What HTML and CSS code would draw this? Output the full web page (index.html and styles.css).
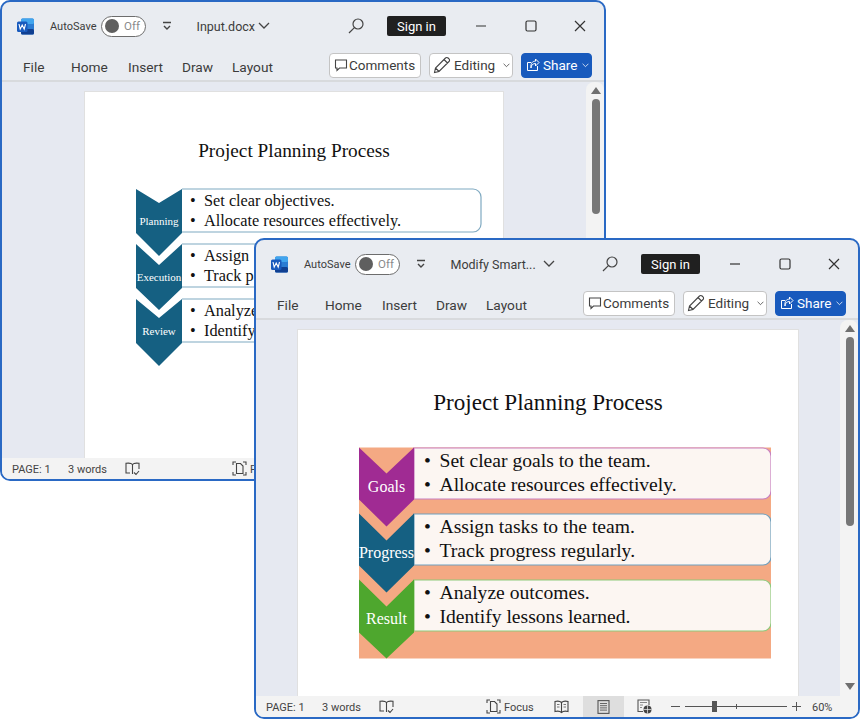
FILE: index.html
```html
<!DOCTYPE html>
<html lang="en">
<head>
    <meta charset="UTF-8">
    <meta name="viewport" content="width=device-width, initial-scale=1.0">
    <title>Word windows</title>
    <link rel="stylesheet" href="styles.css">
</head>
<body>
    <svg class="icon-defs" width="0" height="0">
        <symbol id="i-word" viewBox="0 0 17 17">
            <rect x="4" y="0.5" width="13" height="16" rx="1.5" fill="#2b7cd3"/>
            <rect x="4" y="0.5" width="13" height="5.5" rx="1.5" fill="#41a5ee"/>
            <rect x="4" y="11" width="13" height="5.5" rx="1.5" fill="#103f91"/>
            <rect x="0" y="3.5" width="10.5" height="10.5" rx="1.5" fill="#185abd"/>
            <path d="M2 6l1.2 5.2L5.2 7l2 4.2L8.5 6" fill="none" stroke="#fff" stroke-width="1.1"/>
        </symbol>
        <symbol id="i-qat" viewBox="0 0 10 10">
            <path d="M1 1.5h8M2 5l3 3 3-3" fill="none" stroke="#444" stroke-width="1.4"/>
        </symbol>
        <symbol id="i-chev" viewBox="0 0 12 8">
            <path d="M1 1l5 5 5-5" fill="none" stroke="currentColor" stroke-width="1.3"/>
        </symbol>
        <symbol id="i-search" viewBox="0 0 16 16">
            <circle cx="10" cy="6" r="5" fill="none" stroke="#444" stroke-width="1.2"/>
            <path d="M6.4 9.6L1 15" fill="none" stroke="#444" stroke-width="1.2"/>
        </symbol>
        <symbol id="i-min" viewBox="0 0 12 12">
            <path d="M1 6h10" stroke="#333" stroke-width="1.2"/>
        </symbol>
        <symbol id="i-max" viewBox="0 0 12 12">
            <rect x="1" y="1" width="10" height="10" rx="1.5" fill="none" stroke="#333" stroke-width="1.2"/>
        </symbol>
        <symbol id="i-close" viewBox="0 0 12 12">
            <path d="M1 1l10 10M11 1L1 11" stroke="#333" stroke-width="1.2"/>
        </symbol>
        <symbol id="i-comment" viewBox="0 0 14 14">
            <path d="M1.5 2h11v8h-7L3 12.5V10H1.5z" fill="none" stroke="#444" stroke-width="1.1"/>
        </symbol>
        <symbol id="i-pencil" viewBox="0 0 18 18">
            <path d="M1.5 16.5l1-4.5L12.5 2a1.8 1.8 0 0 1 2.6 0l.9.9a1.8 1.8 0 0 1 0 2.6L6 15.5zM2.5 12L6 15.5M11 3.5L14.5 7" fill="none" stroke="#444" stroke-width="1.1"/>
        </symbol>
        <symbol id="i-share" viewBox="0 0 14 14">
            <path d="M5 4.5H1.5v8h10V8M5 10c0-3 2-4.5 4.5-4.5V8L13 4.5 9.5 1v2.2C6.5 3 4.5 5 5 10z" fill="none" stroke="#fff" stroke-width="1"/>
        </symbol>
        <symbol id="i-book" viewBox="0 0 15 14">
            <path d="M7.5 2.5C6.5 1.3 3 1 1 1.3V11h4M7.5 2.5C8.5 1.3 12 1 14 1.3V7M7.5 2.5V12M9 10.5l2 2 3-3.5" fill="none" stroke="#444" stroke-width="1.1"/>
        </symbol>
        <symbol id="i-focus" viewBox="0 0 15 15">
            <path d="M1 4V1h3M11 1h3v3M1 11v3h3M14 11v3h-3" fill="none" stroke="#444" stroke-width="1.1"/>
            <path d="M4.5 2.5h4l2.5 2.5v7.5H4.5z" fill="none" stroke="#444" stroke-width="1.1"/>
        </symbol>
        <symbol id="i-read" viewBox="0 0 15 14">
            <path d="M7.5 2.5C6 1 3 1 1 1.5v10c2-.5 5-.5 6.5 1 1.5-1.5 4.5-1.5 6.5-1v-10C12 1 9 1 7.5 2.5zM7.5 2.5v10" fill="none" stroke="#444" stroke-width="1.1"/>
            <path d="M3 4.5h2.5M3 7h2.5M9.5 4.5H12M9.5 7H12" stroke="#777" stroke-width="1"/>
        </symbol>
        <symbol id="i-print" viewBox="0 0 13 14">
            <rect x="1" y="0.6" width="11" height="12.8" fill="none" stroke="#555" stroke-width="1.1"/>
            <path d="M3 3.5h7M3 5.7h7M3 7.9h7M3 10.1h7" stroke="#666" stroke-width="1"/>
        </symbol>
        <symbol id="i-web" viewBox="0 0 15 15">
            <path d="M6 12.5H1V1h11v5" fill="none" stroke="#555" stroke-width="1.1"/>
            <path d="M3 3.5h7M3 6h3M3 8.5h2" stroke="#888" stroke-width="1"/>
            <circle cx="10.5" cy="10.5" r="4" fill="#444"/>
            <path d="M6.5 10.5h8M10.5 6.5v8" stroke="#eee" stroke-width="0.7"/>
        </symbol>
    </svg>

    <div class="win win-input">
        <div class="titlebar">
            <svg class="word-icon"><use href="#i-word"/></svg>
            <span class="autosave">AutoSave</span>
            <span class="toggle"><span class="toggle-knob"></span>Off</span>
            <svg class="qat"><use href="#i-qat"/></svg>
            <span class="doc-name">Input.docx</span>
            <svg class="doc-chev"><use href="#i-chev"/></svg>
            <div class="title-right">
                <svg class="search"><use href="#i-search"/></svg>
                <span class="signin">Sign in</span>
                <svg class="caption"><use href="#i-min"/></svg>
                <svg class="caption"><use href="#i-max"/></svg>
                <svg class="caption"><use href="#i-close"/></svg>
            </div>
        </div>
        <div class="ribbon">
            <span class="tab tab-file">File</span>
            <span class="tab tab-home">Home</span>
            <span class="tab tab-insert">Insert</span>
            <span class="tab tab-draw">Draw</span>
            <span class="tab">Layout</span>
            <div class="ribbon-right">
                <span class="btn btn-comments"><svg class="btn-icon"><use href="#i-comment"/></svg>Comments</span>
                <span class="btn btn-editing"><svg class="pencil"><use href="#i-pencil"/></svg>Editing<svg class="btn-chev"><use href="#i-chev"/></svg></span>
                <span class="btn btn-share"><svg class="btn-icon"><use href="#i-share"/></svg>Share<svg class="btn-chev"><use href="#i-chev"/></svg></span>
            </div>
        </div>
        <div class="docarea">
            <div class="canvas">
                <div class="page page-input">
                    <div class="doc-title">Project Planning Process</div>
                    <svg class="art" width="346" height="178" viewBox="136 189 346 178">
                        <path class="chev-blue" d="M136 190L159 204L182 190V233V234L159 257L136 234Z"/>
                        <path class="chev-blue" d="M136 245L159 266L182 245V288V289L159 311L136 289Z"/>
                        <path class="chev-blue" d="M136 300L159 319L182 300V343V344L159 367L136 344Z"/>
                        <path class="box-thin" d="M182 190H473a8 8 0 0 1 8 8V225a8 8 0 0 1-8 8H182"/>
                        <path class="box-thin" d="M182 245H473a8 8 0 0 1 8 8V280a8 8 0 0 1-8 8H182"/>
                        <path class="box-thin" d="M182 300H473a8 8 0 0 1 8 8V335a8 8 0 0 1-8 8H182"/>
                        <text class="lbl-small" x="159" y="226">Planning</text>
                        <text class="lbl-small" x="159" y="282">Execution</text>
                        <text class="lbl-small" x="159" y="336">Review</text>
                        <text class="item-small" x="190" y="207">•</text>
                        <text class="item-small" x="204" y="207">Set clear objectives.</text>
                        <text class="item-small" x="190" y="227">•</text>
                        <text class="item-small" x="204" y="227">Allocate resources effectively.</text>
                        <text class="item-small" x="190" y="262">•</text>
                        <text class="item-small" x="204" y="262">Assign</text>
                        <text class="item-small" x="190" y="282">•</text>
                        <text class="item-small" x="204" y="282">Track p</text>
                        <text class="item-small" x="190" y="317">•</text>
                        <text class="item-small" x="204" y="317">Analyze</text>
                        <text class="item-small" x="190" y="337">•</text>
                        <text class="item-small" x="204" y="337">Identify</text>
                    </svg>
                </div>
            </div>
            <div class="scroll">
                <span class="arrow-up"></span>
                <span class="thumb thumb-input"></span>
                <span class="arrow-down"></span>
            </div>
        </div>
        <div class="status">
            <span class="st-page">PAGE: 1</span>
            <span class="st-words">3 words</span>
            <svg class="st-book"><use href="#i-book"/></svg>
            <svg class="st-focus"><use href="#i-focus"/></svg>
            <span class="st-focus-label">F</span>
        </div>
    </div>

    <div class="win win-result">
        <div class="titlebar">
            <svg class="word-icon"><use href="#i-word"/></svg>
            <span class="autosave">AutoSave</span>
            <span class="toggle"><span class="toggle-knob"></span>Off</span>
            <svg class="qat"><use href="#i-qat"/></svg>
            <span class="doc-name">Modify Smart...</span>
            <svg class="doc-chev"><use href="#i-chev"/></svg>
            <div class="title-right">
                <svg class="search"><use href="#i-search"/></svg>
                <span class="signin">Sign in</span>
                <svg class="caption"><use href="#i-min"/></svg>
                <svg class="caption"><use href="#i-max"/></svg>
                <svg class="caption"><use href="#i-close"/></svg>
            </div>
        </div>
        <div class="ribbon">
            <span class="tab tab-file">File</span>
            <span class="tab tab-home">Home</span>
            <span class="tab tab-insert">Insert</span>
            <span class="tab tab-draw">Draw</span>
            <span class="tab">Layout</span>
            <div class="ribbon-right">
                <span class="btn btn-comments"><svg class="btn-icon"><use href="#i-comment"/></svg>Comments</span>
                <span class="btn btn-editing"><svg class="pencil"><use href="#i-pencil"/></svg>Editing<svg class="btn-chev"><use href="#i-chev"/></svg></span>
                <span class="btn btn-share"><svg class="btn-icon"><use href="#i-share"/></svg>Share<svg class="btn-chev"><use href="#i-chev"/></svg></span>
            </div>
        </div>
        <div class="docarea">
            <div class="canvas">
                <div class="page page-result">
                    <div class="doc-title">Project Planning Process</div>
                    <svg class="art" width="412" height="212" viewBox="359 447.5 412 212">
                        <rect class="art-bg" x="359" y="448" width="412" height="211"/>
                        <path class="box-goals" d="M414 448.5H763a8 8 0 0 1 8 8V491.5a8 8 0 0 1-8 8H414Z"/>
                        <path class="box-progress" d="M414 514.5H763a8 8 0 0 1 8 8V557.5a8 8 0 0 1-8 8H414Z"/>
                        <path class="box-result" d="M414 580.5H763a8 8 0 0 1 8 8V623.5a8 8 0 0 1-8 8H414Z"/>
                        <path class="chev-goals" d="M359 448L386.5 474L414 448V500L386.5 527L359 500Z"/>
                        <path class="chev-progress" d="M359 514L386.5 541L414 514V566L386.5 593L359 566Z"/>
                        <path class="chev-result" d="M359 580L386.5 607L414 580V633L386.5 659L359 633Z"/>
                        <text class="lbl-big" x="386.5" y="492">Goals</text>
                        <text class="lbl-big" x="386.5" y="558">Progress</text>
                        <text class="lbl-big" x="386.5" y="624">Result</text>
                        <text class="item-big" x="424" y="467">•</text>
                        <text class="item-big" x="439.5" y="467">Set clear goals to the team.</text>
                        <text class="item-big" x="424" y="491">•</text>
                        <text class="item-big" x="439.5" y="491">Allocate resources effectively.</text>
                        <text class="item-big" x="424" y="533">•</text>
                        <text class="item-big" x="439.5" y="533">Assign tasks to the team.</text>
                        <text class="item-big" x="424" y="557">•</text>
                        <text class="item-big" x="439.5" y="557">Track progress regularly.</text>
                        <text class="item-big" x="424" y="599">•</text>
                        <text class="item-big" x="439.5" y="599">Analyze outcomes.</text>
                        <text class="item-big" x="424" y="623">•</text>
                        <text class="item-big" x="439.5" y="623">Identify lessons learned.</text>
                    </svg>
                </div>
            </div>
            <div class="scroll">
                <span class="arrow-up"></span>
                <span class="thumb thumb-result"></span>
                <span class="arrow-down"></span>
            </div>
        </div>
        <div class="status">
            <span class="st-page">PAGE: 1</span>
            <span class="st-words">3 words</span>
            <svg class="st-book"><use href="#i-book"/></svg>
            <svg class="st-focus"><use href="#i-focus"/></svg>
            <span class="st-focus-label">Focus</span>
            <svg class="st-read"><use href="#i-read"/></svg>
            <span class="st-print"><svg class="st-print-icon"><use href="#i-print"/></svg></span>
            <svg class="st-web"><use href="#i-web"/></svg>
            <span class="zoom-minus"></span>
            <span class="slider"><span class="slider-tick"></span><span class="slider-thumb"></span></span>
            <span class="zoom-plus"></span>
            <span class="zoom-val">60%</span>
        </div>
    </div>
</body>
</html>
```

FILE: styles.css
```css
* {
    box-sizing: border-box;
}
html, body {
    margin: 0;
    height: 100%;
    overflow: hidden;
}
body {
    background: #ffffff;
    font-family: Roboto, "Noto Sans", sans-serif;
    color: #3c3c3c;
}
svg {
    display: block;
    flex: none;
}
.icon-defs {
    position: absolute;
}

/* windows sit freely on the desktop */
.win {
    position: absolute;
    width: 606px;
    height: 481px;
    display: flex;
    flex-direction: column;
    border: 2px solid #2a69c4;
    border-radius: 10px;
    overflow: hidden;
    background: #e9ecf1;
}
.win-input {
    left: 0;
    top: 0;
}
.win-result {
    left: 254px;
    top: 238px;
}

.titlebar {
    height: 48px;
    flex: none;
    display: flex;
    align-items: center;
}
.word-icon {
    width: 17px;
    height: 17px;
    margin-left: 15px;
}
.autosave {
    margin-left: 16px;
    width: 51px;
    font-size: 11px;
    white-space: nowrap;
}
.toggle {
    width: 45px;
    height: 21px;
    border: 1px solid #6d6d6d;
    border-radius: 11px;
    background: #fff;
    display: flex;
    align-items: center;
    padding-left: 3px;
    gap: 5px;
    font-size: 11.5px;
    color: #8a8a8a;
}
.toggle-knob {
    width: 14px;
    height: 14px;
    border-radius: 50%;
    background: #5f5f5f;
}
.qat {
    width: 10px;
    height: 10px;
    margin-left: 16px;
}
.doc-name {
    margin-left: 24.5px;
    font-size: 12.5px;
    white-space: nowrap;
}
.doc-chev {
    width: 12px;
    height: 8px;
    margin-left: 3px;
    color: #444;
}
.win-result .doc-chev {
    margin-left: 7px;
}
.title-right {
    margin-left: auto;
    padding-right: 18px;
    display: flex;
    align-items: center;
}
.search {
    width: 16px;
    height: 16px;
}
.signin {
    width: 59px;
    height: 20px;
    margin-left: 23px;
    margin-right: 29px;
    background: #202020;
    border-radius: 2px;
    color: #fff;
    font-size: 13px;
    display: flex;
    align-items: center;
    justify-content: center;
}
.caption {
    width: 12px;
    height: 12px;
    margin-right: 37.5px;
}
.caption:last-child {
    margin-right: 0;
}

.ribbon {
    height: 32px;
    flex: none;
    display: flex;
    align-items: center;
    padding: 0 12px 0 21px;
    border-bottom: 2px solid #d8dadd;
}
.tab {
    font-size: 13.7px;
    white-space: nowrap;
    padding-top: 4px;
}
.tab-file {
    width: 48px;
}
.tab-home {
    width: 57px;
}
.tab-insert {
    width: 54px;
}
.tab-draw {
    width: 50px;
}
.ribbon-right {
    margin-left: auto;
    display: flex;
    gap: 8px;
}
.btn {
    height: 25px;
    border: 1px solid #c4c4c4;
    border-radius: 4px;
    background: #fff;
    display: flex;
    align-items: center;
    font-size: 13.5px;
    white-space: nowrap;
}
.btn-comments {
    width: 92px;
    padding-left: 4px;
    gap: 1px;
}
.btn-editing {
    width: 84px;
    padding-left: 3px;
    gap: 3px;
}
.btn-share {
    width: 71px;
    padding-left: 4px;
    gap: 3px;
    background: #185abd;
    border-color: #185abd;
    color: #fff;
}
.btn-icon {
    width: 14px;
    height: 14px;
}
.pencil {
    width: 18px;
    height: 18px;
}
.btn-chev {
    width: 7px;
    height: 5px;
    margin-left: auto;
    margin-right: 2px;
    color: inherit;
}

.docarea {
    flex: 1;
    min-height: 0;
    display: flex;
    background: #e6e9f1;
}
.canvas {
    flex: 1;
    min-width: 0;
    padding-top: 10px;
}
.page {
    height: 100%;
    background: #fff;
    box-shadow: 0 0 0 1px #e0e0e0;
    display: flex;
    flex-direction: column;
}
.page-input {
    width: 418px;
    margin-left: 83px;
}
.page-result {
    width: 500px;
    margin-left: 42px;
}
.doc-title {
    font-family: "Liberation Serif", serif;
    color: #111;
    text-align: center;
}
.page-input .doc-title {
    font-size: 19.3px;
    line-height: 22px;
    margin-top: 48px;
}
.page-result .doc-title {
    font-size: 23.1px;
    line-height: 27px;
    margin-top: 59px;
}
.page-input .art {
    margin: 26px 0 0 51px;
}
.page-result .art {
    margin: 31px 0 0 61px;
}

/* smart art */
.art text {
    font-family: "Liberation Serif", serif;
}
.chev-blue, .chev-progress {
    fill: #156082;
}
.chev-goals {
    fill: #a02b93;
}
.chev-result {
    fill: #4ea72e;
}
.box-thin {
    fill: #fff;
    stroke: #7fa9c1;
    stroke-width: 1.2;
}
.art-bg {
    fill: #f4a983;
}
.box-goals, .box-progress, .box-result {
    fill: #fcf6f2;
    stroke-width: 1.2;
}
.box-goals {
    stroke: #c77fc0;
}
.box-progress {
    stroke: #6e9fbd;
}
.box-result {
    stroke: #8ec97b;
}
.lbl-small {
    fill: #fff;
    font-size: 11px;
    text-anchor: middle;
}
.lbl-big {
    fill: #fff;
    font-size: 16px;
    text-anchor: middle;
}
.item-small {
    fill: #111;
    font-size: 16.3px;
}
.item-big {
    fill: #111;
    font-size: 19.6px;
}

.scroll {
    width: 18px;
    flex: none;
    background: #f3f3f3;
    border-radius: 8px 8px 0 0;
    display: flex;
    flex-direction: column;
    align-items: center;
    padding: 5px 0 6px 2px;
}
.arrow-up {
    width: 0;
    height: 0;
    border-left: 5px solid transparent;
    border-right: 5px solid transparent;
    border-bottom: 7px solid #6f6f6f;
}
.arrow-down {
    width: 0;
    height: 0;
    margin-top: auto;
    border-left: 5px solid transparent;
    border-right: 5px solid transparent;
    border-top: 7px solid #6f6f6f;
}
.thumb {
    width: 8px;
    margin-top: 5px;
    border-radius: 4px;
    background: #777;
}
.thumb-input {
    height: 115px;
}
.thumb-result {
    height: 189px;
}

.status {
    height: 21px;
    flex: none;
    display: flex;
    align-items: center;
    background: #f3f3f3;
    font-size: 11px;
    color: #444;
}
.st-page {
    margin-left: 10px;
    width: 56px;
    padding-top: 1px;
    white-space: nowrap;
}
.st-words {
    width: 57px;
    padding-top: 1px;
    white-space: nowrap;
}
.st-book {
    width: 15px;
    height: 14px;
}
.st-focus {
    width: 15px;
    height: 15px;
    margin-left: 92px;
}
.st-focus-label {
    margin-left: 3px;
    width: 28px;
    padding-top: 1px;
}
.st-read {
    width: 15px;
    height: 14px;
    margin-left: 22px;
}
.st-print {
    width: 41px;
    height: 21px;
    margin-left: 14px;
    background: #dedede;
    display: flex;
    align-items: center;
    justify-content: center;
}
.st-print-icon {
    width: 13px;
    height: 14px;
}
.st-web {
    width: 15px;
    height: 15px;
    margin-left: 13px;
}
.zoom-minus {
    width: 9px;
    height: 1px;
    margin-left: 19px;
    background: #555;
}
.slider {
    width: 102px;
    height: 1px;
    margin-left: 5px;
    background: #555;
    position: relative;
}
.slider-thumb {
    position: absolute;
    left: 27px;
    top: -5px;
    width: 5px;
    height: 11px;
    background: #555;
}
.slider-tick {
    position: absolute;
    left: 51px;
    top: -2px;
    width: 1px;
    height: 5px;
    background: #555;
}
.zoom-plus {
    width: 9px;
    height: 9px;
    margin-left: 5px;
    background: linear-gradient(#555, #555) center / 9px 1px no-repeat, linear-gradient(#555, #555) center / 1px 9px no-repeat;
}
.zoom-val {
    margin-left: 11px;
    padding-top: 1px;
}
```
